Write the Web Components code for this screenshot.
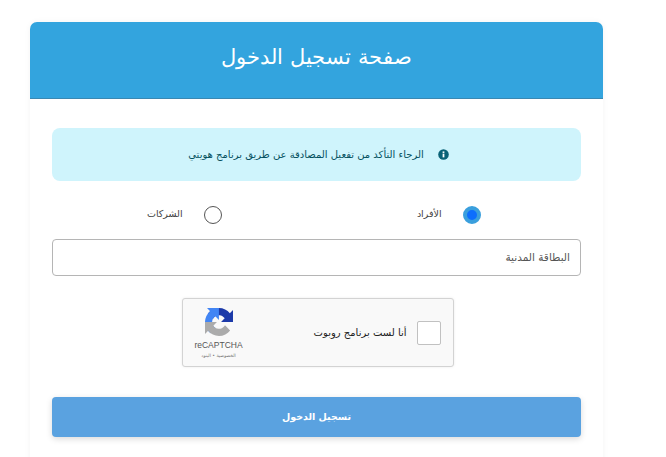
<!DOCTYPE html>
<html lang="ar" dir="rtl">
<head>
<meta charset="utf-8">
<title>صفحة تسجيل الدخول</title>
<style>
html, body { margin: 0; height: 100%; background: #fff; overflow: hidden; }
body { font-family: "DejaVu Sans", "Noto Sans", sans-serif; }
</style>
</head>
<body>
<login-page>
  <login-card title-text="صفحة تسجيل الدخول">
    <info-alert>الرجاء التأكد من تفعيل المصادقة عن طريق برنامج هويتي</info-alert>
    <radio-row>
      <radio-option checked>الأفراد</radio-option>
      <radio-option>الشركات</radio-option>
    </radio-row>
    <text-field placeholder="البطاقة المدنية"></text-field>
    <captcha-box></captcha-box>
    <submit-button>تسجيل الدخول</submit-button>
  </login-card>
</login-page>
<script>
const FONT = '"DejaVu Sans", "Noto Sans", sans-serif';

class LoginPage extends HTMLElement {
  constructor() {
    super();
    this.attachShadow({ mode: 'open' }).innerHTML = `
<style>
:host { display: block; padding: 22px 63px 0 30px; box-sizing: border-box; height: 457px; overflow: hidden; font-family: ${FONT}; }
</style>
<slot></slot>`;
  }
}

class LoginCard extends HTMLElement {
  constructor() {
    super();
    this.attachShadow({ mode: 'open' }).innerHTML = `
<style>
:host { display: block; background: #fff; border-radius: 8px 8px 0 0; box-shadow: 0 0 6px rgba(0,0,0,.05); height: 460px; }
header {
  background: #33a4de;
  border-bottom: 1px solid #3a88b2;
  border-radius: 7px 7px 0 0;
  height: 76px;
  display: flex;
  align-items: center;
  justify-content: center;
  color: #fff;
  font-size: 21px;
  font-weight: 300;
}
header span { position: relative; top: -3px; }
.body { padding: 29px 22px 0; display: flex; flex-direction: column; }
</style>
<header><span id="title"></span></header>
<div class="body"><slot></slot></div>`;
  }
  connectedCallback() {
    this.shadowRoot.getElementById('title').textContent = this.getAttribute('title-text');
  }
}

class InfoAlert extends HTMLElement {
  constructor() {
    super();
    this.attachShadow({ mode: 'open' }).innerHTML = `
<style>
:host { display: flex; align-items: center; justify-content: center; gap: 14px; height: 53px; padding-left: 4px; box-sizing: border-box; background: #cff4fc; border-radius: 8px; color: #055160; font-size: 10px; margin-bottom: 22px; }
svg { width: 11px; height: 11px; flex: none; }
</style>
<svg viewBox="0 0 10 10"><circle cx="5" cy="5" r="4.8" fill="#0b6277"/><rect x="4.2" y="4.2" width="1.6" height="3.4" fill="#fff"/><rect x="4.2" y="2.2" width="1.6" height="1.4" fill="#fff"/></svg>
<span><slot></slot></span>`;
  }
}

class RadioRow extends HTMLElement {
  constructor() {
    super();
    this.attachShadow({ mode: 'open' }).innerHTML = `
<style>
:host { display: grid; grid-template-columns: 1fr 1fr; height: 24px; margin-bottom: 12px; }
</style>
<slot></slot>`;
  }
}

class RadioOption extends HTMLElement {
  constructor() {
    super();
    this.attachShadow({ mode: 'open' }).innerHTML = `
<style>
:host { display: flex; align-items: center; justify-content: center; gap: 21px; color: #444; font-size: 9.5px; }
.dot { width: 18px; height: 18px; box-sizing: border-box; border-radius: 50%; border: 1px solid #555; background: #fff; flex: none; }
:host([checked]) .dot { border: 4px solid #3a9fdd; background: #0d6efd; }
span { position: relative; top: -2px; }
</style>
<div class="dot"></div>
<span><slot></slot></span>`;
  }
}

class TextField extends HTMLElement {
  constructor() {
    super();
    this.attachShadow({ mode: 'open' }).innerHTML = `
<style>
:host { display: block; margin-bottom: 22px; }
input {
  display: block; width: 100%; height: 37px; box-sizing: border-box;
  border: 1px solid #b5b5b5; border-radius: 4px; background: #fff;
  padding: 0 10px 2px; font: 10.5px ${FONT}; outline: none; direction: rtl;
}
input::placeholder { color: #555; opacity: 1; }
</style>
<input type="text">`;
  }
  connectedCallback() {
    this.shadowRoot.querySelector('input').placeholder = this.getAttribute('placeholder');
  }
}

class CaptchaBox extends HTMLElement {
  constructor() {
    super();
    this.attachShadow({ mode: 'open' }).innerHTML = `
<style>
:host { display: flex; align-self: center; align-items: center; width: 272px; height: 69px; box-sizing: border-box; background: #f9f9f9; border: 1px solid #d3d3d3; border-radius: 3px; box-shadow: 0 0 3px rgba(0,0,0,.08); margin: 0 0 30px 2px; padding: 0 12px 0 8px; direction: rtl; }
.check { width: 24px; height: 24px; box-sizing: border-box; background: #fff; border: 1px solid #c1c1c1; border-radius: 2px; flex: none; }
.label { color: #222; font-size: 10px; margin-right: 10px; flex: 1; }
.brand { width: 56px; display: flex; flex-direction: column; align-items: center; flex: none; direction: ltr; }
svg { width: 28px; height: 28px; display: block; }
.name { font: 8.5px "Liberation Sans", Arial, sans-serif; color: #555; margin-top: 4px; }
.links { font-size: 4.5px; color: #777; margin-top: 3px; direction: rtl; white-space: nowrap; }
</style>
<div class="check"></div>
<div class="label">أنا لست برنامج روبوت</div>
<div class="brand">
  <svg viewBox="0 0 64 64">
    <path d="M64 31.955l-.033-1.37V4.687l-7.16 7.16C50.948 4.674 42.033.093 32.05.093c-10.4 0-19.622 4.96-25.458 12.64l11.736 11.86a15.55 15.55 0 0 1 4.754-5.334c2.05-1.6 4.952-2.906 8.968-2.906.485 0 .86.057 1.135.163 4.976.393 9.288 3.14 11.828 7.124l-8.307 8.307 32.294.008" fill="#1c3aa9"/>
    <path d="M31.862.094l-1.37.033H4.594l7.16 7.16C4.58 13.147 0 22.06 0 32.046c0 10.4 4.96 19.622 12.64 25.458L24.5 45.768a15.55 15.55 0 0 1-5.334-4.754c-1.6-2.05-2.906-4.952-2.906-8.968 0-.485.057-.86.163-1.135.393-4.976 3.14-9.288 7.124-11.828l8.307 8.307.008-32.294" fill="#4285f4"/>
    <path d="M.001 32.045l.033 1.37v25.898l7.16-7.16c5.86 7.173 14.774 11.754 24.76 11.754 10.4 0 19.622-4.96 25.458-12.64l-11.736-11.86a15.55 15.55 0 0 1-4.754 5.334c-2.05 1.6-4.952 2.906-8.968 2.906-.485 0-.86-.057-1.135-.163-4.976-.393-9.288-3.14-11.828-7.124l8.307-8.307-32.294-.008" fill="#ababab"/>
  </svg>
  <div class="name">reCAPTCHA</div>
  <div class="links">الخصوصية • البنود</div>
</div>`;
  }
}

class SubmitButton extends HTMLElement {
  constructor() {
    super();
    this.attachShadow({ mode: 'open' }).innerHTML = `
<style>
:host { display: block; }
button { display: block; width: 100%; height: 40px; border: 0; border-radius: 4px; padding: 0 0 2px; background: #5aa2e0; color: #fff; font: bold 9.5px ${FONT}; box-shadow: 0 2px 6px rgba(0,0,0,.15); }
</style>
<button type="button"><slot></slot></button>`;
  }
}

customElements.define('login-page', LoginPage);
customElements.define('login-card', LoginCard);
customElements.define('info-alert', InfoAlert);
customElements.define('radio-row', RadioRow);
customElements.define('radio-option', RadioOption);
customElements.define('text-field', TextField);
customElements.define('captcha-box', CaptchaBox);
customElements.define('submit-button', SubmitButton);
</script>
</body>
</html>
